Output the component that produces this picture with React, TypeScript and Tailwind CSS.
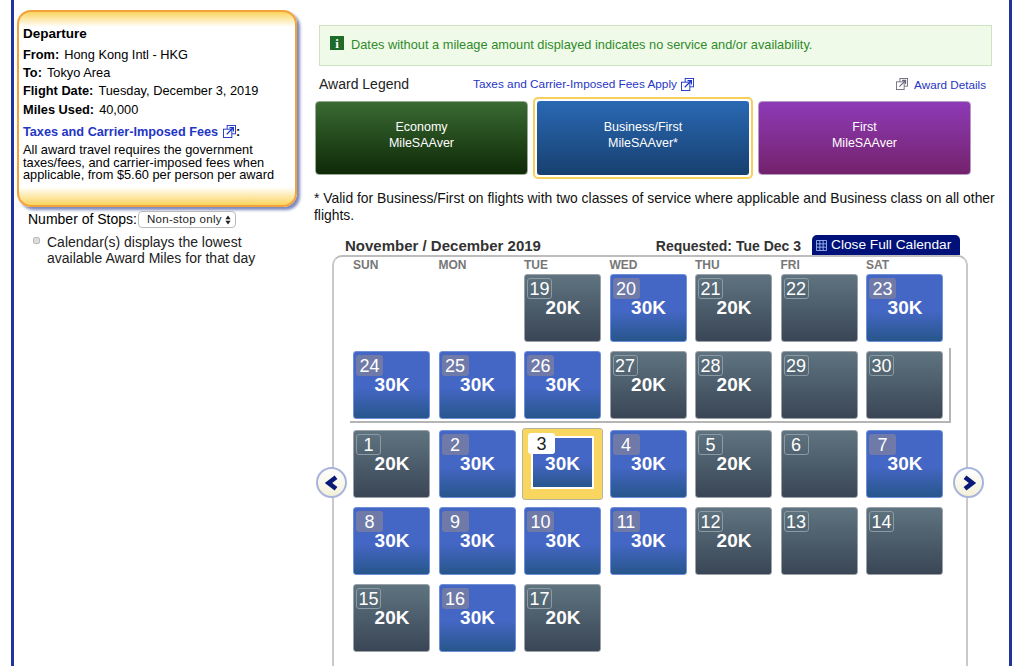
import React from "react";

type CellProps = {
  day: number
  miles?: string
  blue?: boolean
  selected?: boolean
}

const ExtLink = ({ className }: { className?: string }) => (
  <svg viewBox="0 0 14 14" className={className} fill="none" stroke="currentColor" strokeWidth="1">
    <rect x="4.5" y="0.5" width="9" height="9" fill="#fff" />
    <rect x="0.5" y="4.5" width="9" height="9" fill="#fff" />
    <path d="M4 10 L11 3 M7 2.8 H11.2 V7" strokeWidth="1.3" />
  </svg>
)

function Cell({ day, miles, blue, selected }: CellProps) {
  if (selected) {
    return (
      <div className="relative -mx-[2px] -my-[2px] h-[72px] rounded-[3px] border border-[#b9b59a] bg-[#f9d65f] px-[8px] pt-[7px] pb-[10px]">
        <div className="flex h-full items-center justify-center border-2 border-white bg-gradient-to-b from-[#4466c4] from-50% to-[#27568c] pt-[3px] text-[19px] font-bold text-white">
          {miles}
        </div>
        <span className="absolute left-[5px] top-[4px] flex h-[21px] w-[27px] items-center justify-center rounded-[3px] bg-white text-[18px] leading-none text-[#222]">{day}</span>
      </div>
    )
  }
  return (
    <div className={`relative flex h-[68px] items-center justify-center rounded-[3px] border pl-[1px] text-[19px] font-bold text-white ${blue ? "border-[#6f8fd8] bg-gradient-to-b from-[#4466c4] from-55% to-[#27568c]" : "border-[#9aa2a8] bg-gradient-to-b from-[#5f7480] to-[#3a4656]"}`}>
      {miles}
      <span className={`absolute left-[2px] top-[3px] flex h-[21px] items-center justify-center rounded-[3px] text-[18px] font-normal leading-none text-white ${blue ? "w-[27px] bg-[#6f7aa8]" : "w-[25px] border border-[#8c9aa4]"}`}>{day}</span>
    </div>
  )
}

const november: CellProps[] = [
  { day: 24, miles: "30K", blue: true },
  { day: 25, miles: "30K", blue: true },
  { day: 26, miles: "30K", blue: true },
  { day: 27, miles: "20K" },
  { day: 28, miles: "20K" },
  { day: 29 },
  { day: 30 },
]

const firstRow: CellProps[] = [
  { day: 19, miles: "20K" },
  { day: 20, miles: "30K", blue: true },
  { day: 21, miles: "20K" },
  { day: 22 },
  { day: 23, miles: "30K", blue: true },
]

const december: CellProps[] = [
  { day: 1, miles: "20K" },
  { day: 2, miles: "30K", blue: true },
  { day: 3, miles: "30K", blue: true, selected: true },
  { day: 4, miles: "30K", blue: true },
  { day: 5, miles: "20K" },
  { day: 6 },
  { day: 7, miles: "30K", blue: true },
  { day: 8, miles: "30K", blue: true },
  { day: 9, miles: "30K", blue: true },
  { day: 10, miles: "30K", blue: true },
  { day: 11, miles: "30K", blue: true },
  { day: 12, miles: "20K" },
  { day: 13 },
  { day: 14 },
  { day: 15, miles: "20K" },
  { day: 16, miles: "30K", blue: true },
  { day: 17, miles: "20K" },
]

const days = ["SUN", "MON", "TUE", "WED", "THU", "FRI", "SAT"]
const gridClass = "grid grid-cols-[repeat(7,77px)] gap-x-[8.5px]"

const Arrow = ({ left }: { left?: boolean }) => (
  <button className={`absolute top-[232px] flex h-[31px] w-[31px] items-center justify-center rounded-full border-2 border-[#a9b4dc] bg-gradient-to-b from-white to-[#f3f1d8] ${left ? "left-[-16px]" : "right-[-16px]"}`}>
    <svg viewBox="0 0 14 14" className="h-[16px] w-[16px]" fill="none" stroke="#0a1a78" strokeWidth="4">
      <path d={left ? "M10.5 2 L4 7 L10.5 12" : "M3.5 2 L10 7 L3.5 12"} />
    </svg>
  </button>
)

export default function App() {
  return (
    <div className="h-[666px] overflow-hidden bg-white font-['Liberation_Sans',Arial,sans-serif] text-black">
      <div className="mx-[11px] flex h-full w-[1001px] border-x-[3px] border-[#23349b] bg-white">
        <div className="ml-[3px] w-[280px] shrink-0 pt-[10px]">
          <div className="h-[197px] rounded-[14px] border-2 border-[#f2a33a] bg-[linear-gradient(to_bottom,#fbd45e_0,#fff_15px,#fff_calc(100%-18px),#fbd45e_100%)] pl-[4px] pr-[6px] pt-[13px] shadow-[3px_3px_3px_#7f88bd]">
            <h2 className="text-[13.5px] font-bold leading-[18px]">Departure</h2>
            <div className="mt-[3px] text-[12.8px] leading-[18.2px]">
              <p><b className="mr-[5px]">From:</b>Hong Kong Intl - HKG</p>
              <p><b className="mr-[5px]">To:</b>Tokyo Area</p>
              <p><b className="mr-[5px]">Flight Date:</b>Tuesday, December 3, 2019</p>
              <p><b className="mr-[5px]">Miles Used:</b>40,000</p>
            </div>
            <p className="mt-[4px] flex items-center text-[12.7px] font-bold leading-[18px] text-[#1f35c4]">
              Taxes and Carrier-Imposed Fees
              <ExtLink className="ml-[5px] h-[13px] w-[13px]" />
              <span className="text-black">:</span>
            </p>
            <p className="mt-[3px] text-[12.8px] leading-[12.8px]">
              All award travel requires the government taxes/fees, and carrier-imposed fees when applicable, from $5.60 per person per award
            </p>
          </div>
          <div className="ml-[11px] mt-[2px] flex items-center text-[14px]">
            <span>Number of Stops:</span>
            <span className="ml-[1px] flex h-[17px] w-[98px] items-center justify-between rounded-[4px] border border-[#bbb] bg-white pl-[8px] pr-[4px] text-[11.5px] tracking-[0.3px] text-[#222]">
              Non-stop only
              <svg viewBox="0 0 8 12" className="h-[10px] w-[6px]" fill="#222"><path d="M4 0 L7.5 5 H0.5 Z M4 12 L0.5 7 H7.5 Z" /></svg>
            </span>
          </div>
          <div className="ml-[16px] mt-[4px] flex text-[14px] leading-[16px] text-[#222]">
            <span className="mt-[3px] h-[7px] w-[7px] shrink-0 rounded-[2px] border border-[#bbb] bg-[#ddd]" />
            <p className="ml-[7px] w-[230px]">Calendar(s) displays the lowest available Award Miles for that day</p>
          </div>
        </div>

        <div className="ml-[21px] w-[684px] pt-[25px]">
          <div className="ml-[1px] flex h-[41px] w-[673px] items-start border border-[#cfe3c2] bg-[#f0fae9] pl-[10px] pt-[9px] text-[12.8px] text-[#2f8a2a]">
            <span className="mr-[7px] mt-[1px] flex h-[14px] w-[14px] items-center justify-center bg-[#1f6b2a] font-['Liberation_Serif',serif] text-[13px] font-bold leading-none text-white">i</span>
            Dates without a mileage amount displayed indicates no service and/or availability.
          </div>

          <div className="mt-[9px] flex h-[19px] items-center pr-[16px]">
            <span className="ml-[1px] w-[154px] text-[14px] text-[#222]">Award Legend</span>
            <span className="flex items-center text-[11.8px] text-[#1f35c4]">
              Taxes and Carrier-Imposed Fees Apply
              <ExtLink className="ml-[4px] h-[13px] w-[13px]" />
            </span>
            <span className="ml-auto flex items-center text-[11.7px] text-[#1f35c4]">
              <ExtLink className="mr-[6px] h-[12px] w-[12px] text-[#667]" />
              Award Details
            </span>
          </div>

          <div className="-ml-[3px] mt-[3px] flex w-[656px] items-center justify-between text-center text-[12.5px] leading-[16px] text-white">
            <div className="flex h-[74px] w-[213px] items-center justify-center rounded-[4px] border border-[#9aa896] bg-gradient-to-b from-[#3a6b32] to-[#0f2a08] pb-[6px]">
              <p>Economy<br />MileSAAver</p>
            </div>
            <div className="rounded-[5px] border-2 border-[#f9cf5c] p-[2px]">
              <div className="flex h-[74px] w-[212px] items-center justify-center rounded-[3px] bg-gradient-to-b from-[#2a69b4] to-[#17406f] pb-[6px]">
                <p>Business/First<br />MileSAAver*</p>
              </div>
            </div>
            <div className="flex h-[74px] w-[213px] items-center justify-center rounded-[4px] border border-[#b59cc4] bg-gradient-to-b from-[#8e3ab8] to-[#74216c] pb-[6px]">
              <p>First<br />MileSAAver</p>
            </div>
          </div>

          <p className="-ml-[4px] mt-[11px] w-[690px] text-[13.9px] leading-[17px] text-[#111]">
            * Valid for Business/First on flights with two classes of service where applicable and Business class on all other flights.
          </p>

          <div className="relative ml-[14px] mt-[11px] w-[636px]">
            <div className="flex h-[20px] items-end pl-[13px] pr-[8px]">
              <span className="mb-[1px] text-[15px] font-bold leading-[16px] text-[#333]">November / December 2019</span>
              <span className="mb-[1px] ml-auto text-[14px] font-bold leading-[16px] text-[#333]">Requested: Tue Dec 3</span>
              <span className="ml-[11px] flex h-[20px] w-[148px] items-center rounded-t-[5px] bg-[#00127a] pl-[4px] text-[13.7px] text-white">
                <svg viewBox="0 0 12 12" className="mr-[4px] h-[11px] w-[11px]" fill="none" stroke="#9db8ee" strokeWidth="1">
                  <path d="M0.5 0.5H11.5V11.5H0.5Z M4.2 0.5V11.5 M7.8 0.5V11.5 M0.5 4.2H11.5 M0.5 7.8H11.5" />
                </svg>
                Close Full Calendar
              </span>
            </div>

            <div className="h-[420px] rounded-t-[10px] border-x-2 border-t-2 border-x-[#c9c9c9] border-t-[#bdbdbd] pl-[19px] pr-[22px]">
              <div className={`${gridClass} h-[17px] pt-[2px] text-[12px] font-bold leading-[13px] text-[#777]`}>
                {days.map((d) => <span key={d}>{d}</span>)}
              </div>
              <div className={gridClass}>
                <span className="col-span-2" />
                {firstRow.map((c) => <Cell key={c.day} {...c} />)}
              </div>
              <div className="-ml-[3px] mr-[-7px] mt-[6px] border-b-2 border-r-2 border-[#b5b5b5] pb-[2px] pl-[3px] pt-[3px]">
                <div className={gridClass}>
                  {november.map((c) => <Cell key={c.day} {...c} />)}
                </div>
              </div>
              <div className={`${gridClass} mt-[7px] gap-y-[9px]`}>
                {december.map((c) => <Cell key={c.day} {...c} />)}
              </div>
            </div>
            <Arrow left />
            <Arrow />
          </div>
        </div>
      </div>
    </div>
  )
}
